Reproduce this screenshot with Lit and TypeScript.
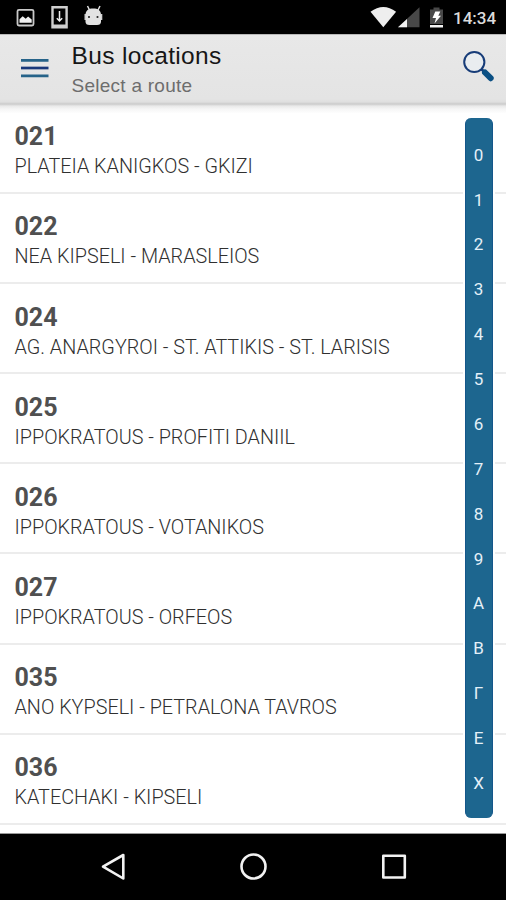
import { LitElement, html, css, svg } from "lit";
import { customElement, property } from "lit/decorators.js";

const ROUTES: [string, string][] = [
  ["021", "PLATEIA KANIGKOS - GKIZI"],
  ["022", "NEA KIPSELI - MARASLEIOS"],
  ["024", "AG. ANARGYROI - ST. ATTIKIS - ST. LARISIS"],
  ["025", "IPPOKRATOUS - PROFITI DANIIL"],
  ["026", "IPPOKRATOUS - VOTANIKOS"],
  ["027", "IPPOKRATOUS - ORFEOS"],
  ["035", "ANO KYPSELI - PETRALONA TAVROS"],
  ["036", "KATECHAKI - KIPSELI"],
];

const INDEX = ["0", "1", "2", "3", "4", "5", "6", "7", "8", "9", "Α", "Β", "Γ", "Ε", "Χ"];

@customElement("status-bar")
class StatusBar extends LitElement {
  static styles = css`
    :host { display: flex; height: 34px; background: #000; color: #dcdcdc; font: 500 17px/34px Roboto, sans-serif; }
    svg { display: block; flex: none; }
    .gap { flex: 1; }
    .time { width: 53px; padding-top: 1px; white-space: nowrap; }
  `;
  render() {
    return html`
      <svg width="110" height="34" viewBox="0 0 110 34">
        <rect x="17.5" y="9.8" width="16" height="15.7" rx="1.5" fill="none" stroke="#c9c9c9" stroke-width="1.8" />
        <path d="M19.5 22.8v-3.6l3.2-3 3 2.6 2.4-2.2 3.6 3v3.2z" fill="#f2f2f2" />
        <path d="M51.300 6h16.500v22.500H51.300zM53.700 8.500v16h11.700v-16z" fill="#cfcfcf" fill-rule="evenodd" />
        <path d="M59.5 11v10M56.8 18.2l2.7 2.8 2.7-2.8" fill="none" stroke="#eee" stroke-width="1.5" />
        <path d="M87.500 6l2.500 5M100 6l-2.500 5" stroke="#ddd" stroke-width="1.5" />
        <path d="M85.5 15c0-4.600 3-6.500 7.700-6.500s7.800 1.900 7.800 6.500v6.500q0 3.500-4 3.500h-7.500q-4 0-4-3.500z" fill="#e2e2e2" />
        <path d="M84.500 14h1.500v6h-1.500zM100.800 14h1.500v6h-1.500z" fill="#d2d2d2" />
        <circle cx="89" cy="17" r="1.050" fill="#222" /><circle cx="97.500" cy="17" r="1.050" fill="#222" />
      </svg>
      <div class="gap"></div>
      <svg width="83" height="34" viewBox="370 0 83 34">
        <path d="M370.500 11.800Q383.300 2 396.100 11.800L383.300 27.300z" fill="#eee" />
        <path d="M398 27.300 419.500 7.300V27.300z" fill="#484848" />
        <path d="M398 27.300 407 19V27.300z" fill="#f2f2f2" />
        <path d="M433.500 7.500h6v2h3.500V24h-13V9.500h3.500z" fill="#484848" />
        <path d="M430 25h13v2.500h-13z" fill="#f2f2f2" />
        <path d="M435.300 11.500h5l-2 4.200h2.700l-6.500 7.800 1.500-5.500h-3.500z" fill="#fff" />
      </svg>
      <div class="time">14:34</div>`;
  }
}

@customElement("app-header")
class AppHeader extends LitElement {
  static styles = css`
    :host {
      display: flex; box-sizing: border-box; height: 79px;
      border-top: 1px solid #b9b9b9;
      background: linear-gradient(#e8e8e8 0, #e4e4e4 64px, #dfdfdf 67px, #cbcbcb 69px, #e9e9e9 71px, #f6f6f6 74px, #fff 79px);
      font-family: "Liberation Sans", Arial, sans-serif;
    }
    svg { display: block; flex: none; }
    .titles { flex: 1; padding: 7px 0 0 0.5px; }
    .title { font-size: 24.5px; line-height: 28px; color: #161616; letter-spacing: 0.34px; }
    .sub { font-size: 19px; line-height: 22px; padding-top: 5px; color: #6d6d6d; letter-spacing: 0.26px; }
  `;
  render() {
    return html`
      <svg width="71" height="68" viewBox="0 35 71 68">
        <path d="M21 60.300h27.500M21 75.800h27.500" stroke="#266389" stroke-width="2.700" />
        <path d="M21 68h27.500" stroke="#19387a" stroke-width="2.700" />
      </svg>
      <div class="titles">
        <div class="title">Bus locations</div>
        <div class="sub">Select a route</div>
      </div>
      <svg width="56" height="68" viewBox="450 35 56 68">
        <circle cx="474.300" cy="62" r="10.100" fill="#e9edf0" stroke="#173c78" stroke-width="2" />
        <path d="M481.500 69.300l4 3.700" stroke="#173c78" stroke-width="2.800" />
        <path d="M485 72.500l5.700 5.700" stroke="#0b5084" stroke-width="6" stroke-linecap="round" />
      </svg>`;
  }
}

@customElement("route-row")
class RouteRow extends LitElement {
  @property() code = "";
  @property() name = "";
  static styles = css`
    :host {
      display: block; box-sizing: border-box; height: 90.1px; padding: 18.4px 0 0 14.500px;
      border-bottom: 2px solid #ececec; font-family: Roboto, sans-serif; white-space: nowrap;
    }
    .code { font-size: 25px; line-height: 30px; font-weight: 700; color: #505050; }
    .name { font-size: 19.8px; line-height: 24px; padding-top: 3px; font-weight: 300; color: #303030; }
  `;
  render() {
    return html`<div class="code">${this.code}</div><div class="name">${this.name}</div>`;
  }
}

@customElement("index-bar")
class IndexBar extends LitElement {
  static styles = css`
    :host {
      display: flex; flex-direction: column; box-sizing: border-box;
      width: 28px; height: 700px; padding: 14.800px 0 12.200px; border-radius: 6px;
      background: #1d668f; border: solid #14568a; border-width: 0 1px;
      box-shadow: 0 0 0 2px #fff;
      font: 400 17px/1 Roboto, sans-serif; color: #e4f0f8;
    }
    span { flex: 1; display: flex; align-items: center; justify-content: center; }
  `;
  render() {
    return html`${INDEX.map((c) => html`<span>${c}</span>`)}`;
  }
}

@customElement("nav-bar")
class NavBar extends LitElement {
  static styles = css`
    :host { display: flex; box-sizing: border-box; height: 66px; padding: 0 98.500px 0 100px; align-items: center; justify-content: space-between; background: #000; }
    svg { display: block; }
  `;
  private icon(shape: unknown) {
    return html`<svg width="28" height="28" viewBox="0 0 28 28" fill="none" stroke="#f2f2f2" stroke-width="2.600" stroke-linejoin="round">${shape}</svg>`;
  }
  render() {
    return html`
      ${this.icon(svg`<path d="M3 13.700 23.300 2V25.500z" />`)}
      ${this.icon(svg`<circle cx="13.500" cy="13.500" r="12" />`)}
      ${this.icon(svg`<rect x="3.300" y="2.800" width="21.500" height="21.700" />`)}`;
  }
}

@customElement("app-root")
class AppRoot extends LitElement {
  static styles = css`
    :host { display: flex; flex-direction: column; height: 900px; background: #fff; overflow: hidden; }
    .content { flex: 1; position: relative; min-height: 0; box-sizing: border-box; overflow: hidden; border-bottom: 1px solid #999; }
    .index { position: absolute; top: 5px; right: 13.500px; }
    .list { margin-top: -9px; }
  `;
  render() {
    return html`
      <status-bar></status-bar>
      <app-header></app-header>
      <div class="content">
        <div class="list">
          ${ROUTES.map(([code, name]) => html`<route-row .code=${code} .name=${name}></route-row>`)}
        </div>
        <index-bar class="index"></index-bar>
      </div>
      <nav-bar></nav-bar>`;
  }
}
